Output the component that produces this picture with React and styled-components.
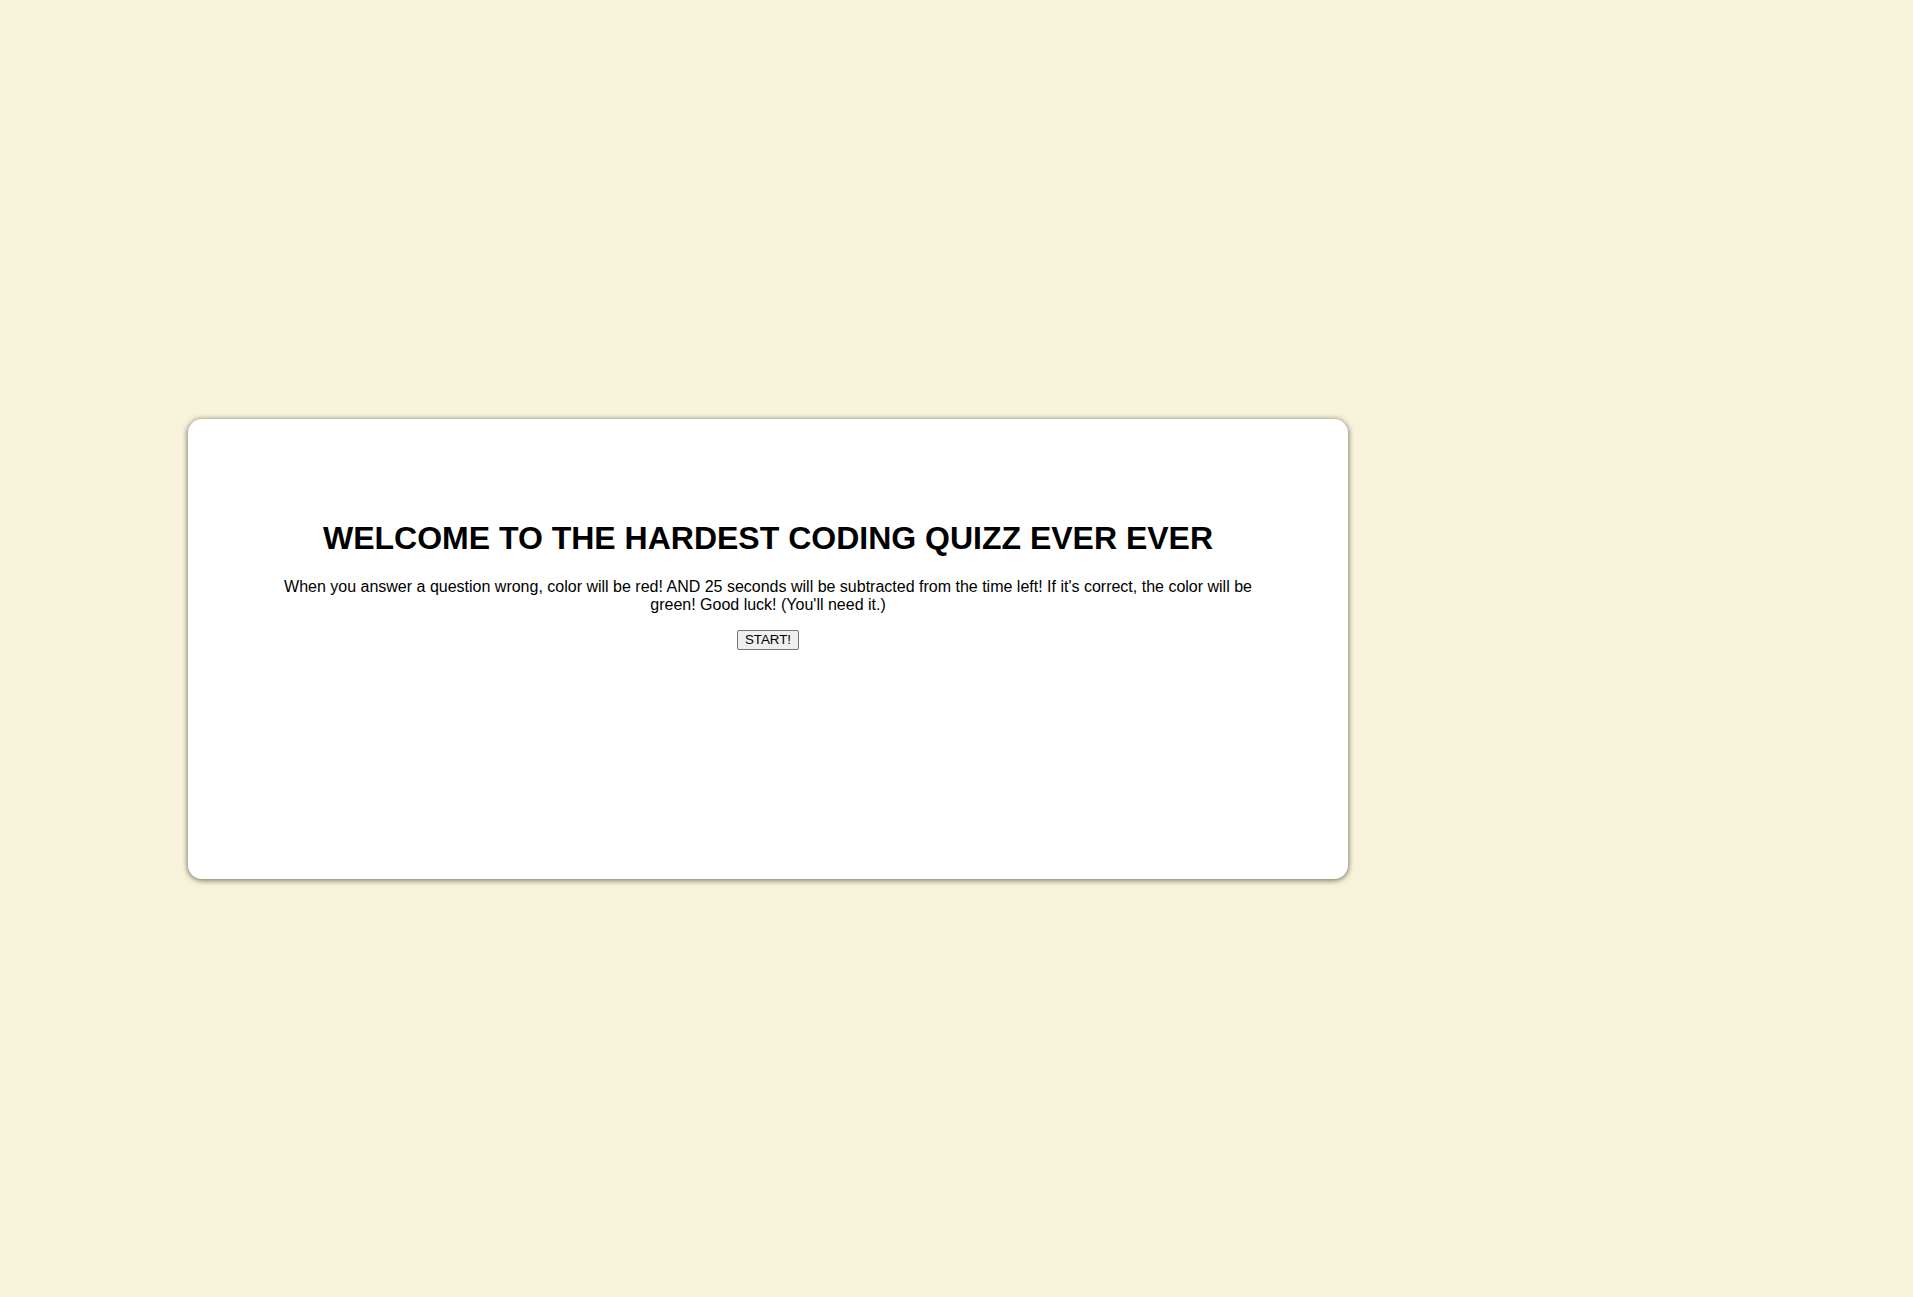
import styled, { createGlobalStyle } from "styled-components";

const GlobalStyle = createGlobalStyle`
    html, body {
        margin: 0;
        background: #f7f2da;
        font-family: "Liberation Sans", Arial, sans-serif;
    }
`;

const Page = styled.main`
    min-height: 1297px;
    box-sizing: border-box;
    padding: 419px 0 0 188px;
`;

const Card = styled.section`
    width: 1160px;
    height: 460px;
    box-sizing: border-box;
    padding: 80px 80px 0;
    background: #ffffff;
    border-radius: 14px;
    box-shadow: 0 1px 5px 1px rgba(60, 58, 45, 0.6);
    text-align: center;
    color: #000;
`;

const Title = styled.h1`
    font-size: 32px;
    font-weight: bold;
    margin: 21px 0;
`;

const Intro = styled.p`
    font-size: 16px;
    margin: 0 0 16px;
`;

const StartButton = styled.button`
    font-family: "Liberation Sans", Arial, sans-serif;
    font-size: 13.33px;
    padding: 1px 7px 2px;
    color: #000;
    background: #efefef;
    border: 1px solid #767676;
    border-radius: 2px;
    cursor: pointer;
`;

const App = () => {
    return (
        <>
            <GlobalStyle />
            <Page>
                <Card>
                    <Title>WELCOME TO THE HARDEST CODING QUIZZ EVER EVER</Title>
                    <Intro>
                        When you answer a question wrong, color will be red! AND 25 seconds will be subtracted from the time left! If it's correct, the color will be green! Good luck! (You'll need it.)
                    </Intro>
                    <StartButton>START!</StartButton>
                </Card>
            </Page>
        </>
    );
};

export default App;
